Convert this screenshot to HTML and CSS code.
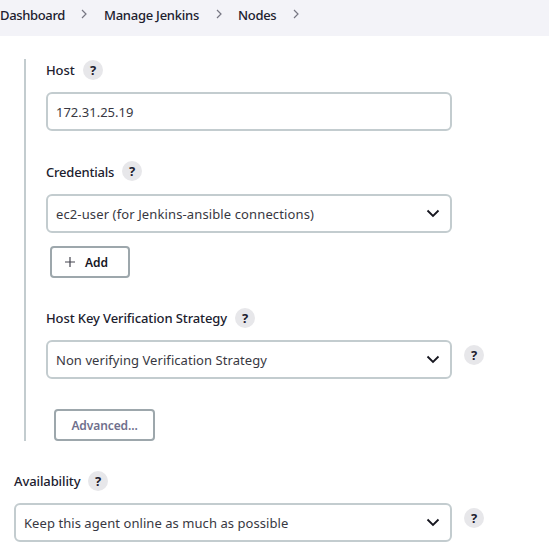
FILE: index.html
```html
<!DOCTYPE html>
<html lang="en">
<head>
<meta charset="utf-8">
<title>Nodes</title>
<link rel="stylesheet" href="styles.css">
</head>
<body>
<nav class="crumbs">
  <span class="crumb crumb-dashboard">Dashboard</span>
  <svg class="sep" viewBox="0 0 6 10"><path d="M1 1l4 4-4 4"/></svg>
  <span class="crumb crumb-manage">Manage Jenkins</span>
  <svg class="sep" viewBox="0 0 6 10"><path d="M1 1l4 4-4 4"/></svg>
  <span class="crumb crumb-nodes">Nodes</span>
  <svg class="sep" viewBox="0 0 6 10"><path d="M1 1l4 4-4 4"/></svg>
</nav>
<main>
  <section class="group">
    <div class="label"><span class="label-host">Host</span><span class="help">?</span></div>
    <div class="field"><span class="value value-host">172.31.25.19</span></div>
    <div class="label label-gap"><span class="label-credentials">Credentials</span><span class="help">?</span></div>
    <div class="field"><span class="value value-user">ec2-user (for Jenkins-ansible connections)</span><svg class="chevron" viewBox="0 0 14 9"><path d="M1.5 1.5L7 7l5.500-5.500"/></svg></div>
    <button class="button add"><svg class="plus" viewBox="0 0 10 10"><path d="M5 0v10M0 5h10"/></svg><span>Add</span></button>
    <div class="label label-strategy"><span class="label-key">Host Key Verification Strategy</span><span class="help">?</span></div>
    <div class="row">
      <div class="field"><span class="value value-strategy">Non verifying Verification Strategy</span><svg class="chevron" viewBox="0 0 14 9"><path d="M1.500 1.500L7 7l5.500-5.500"/></svg></div>
      <span class="help">?</span>
    </div>
    <button class="button advanced"><span>Advanced...</span></button>
  </section>
  <section class="availability">
    <div class="label"><span class="label-availability">Availability</span><span class="help">?</span></div>
    <div class="row">
      <div class="field field-wide"><span class="value value-keep">Keep this agent online as much as possible</span><svg class="chevron" viewBox="0 0 14 9"><path d="M1.500 1.500L7 7l5.500-5.500"/></svg></div>
      <span class="help">?</span>
    </div>
  </section>
</main>
</body>
</html>
```
FILE: styles.css
```css
* { box-sizing: border-box; }
body {
  margin: 0;
  height: 551px;
  overflow: hidden;
  background: #fff;
  color: #20202e;
  font: 13px/20px "Noto Sans", "Open Sans", sans-serif;
}
.crumbs {
  height: 36px;
  display: flex;
  align-items: center;
  padding-bottom: 6px;
  background: #f3f3f8;
  font-weight: 500;
}
.crumb { white-space: nowrap; }
.crumb-dashboard { width: 81px; letter-spacing: -0.35px; }
.crumb-manage { width: 112px; margin-left: 17px; letter-spacing: -0.25px; }
.crumb-nodes { width: 55px; margin-left: 16px; letter-spacing: -0.3px; }
.sep { width: 6px; height: 10px; margin-bottom: 2px; flex: none; }
.sep path { fill: none; stroke: #777783; stroke-width: 1.2; }
.group {
  margin: 23px 0 0 24px;
  padding-left: 20px;
  height: 382px;
  border-left: 2px solid #c3cccf;
  display: flex;
  flex-direction: column;
  align-items: flex-start;
}
.label {
  height: 20px;
  margin-top: 1px;
  display: flex;
  align-items: center;
  gap: 8px;
  font-weight: 500;
  white-space: nowrap;
}
.label-gap { margin-top: 30px; margin-bottom: 1px; }
.label-strategy { margin-top: 30px; }
.label-host { width: 29px; letter-spacing: -0.1px; }
.label-credentials { width: 68px; padding-top: 1px; letter-spacing: -0.2px; }
.label-key { width: 181px; letter-spacing: -0.11px; }
.label-availability { width: 66px; letter-spacing: -0.1px; }
.help {
  width: 20px;
  height: 20px;
  flex: none;
  border-radius: 50%;
  background: #e7e7ea;
  font-size: 13px;
  font-weight: 700;
  line-height: 20px;
  text-align: center;
}
.field {
  width: 406px;
  height: 39px;
  margin-top: 12px;
  padding: 0 10px 0 8px;
  border: 2px solid #c3cccf;
  border-radius: 6px;
  display: flex;
  align-items: center;
  justify-content: space-between;
  flex: none;
}
.field-wide { width: 438px; }
.value { white-space: nowrap; color: #383842; }
.value-user { letter-spacing: 0.12px; }
.value-strategy { letter-spacing: 0.06px; }
.value-keep { letter-spacing: 0.06px; }
.chevron { width: 14px; height: 9px; }
.chevron path { fill: none; stroke: #16161f; stroke-width: 1.8; }
.row { display: flex; gap: 12px; }
.row .help { margin-top: 17px; }
.button {
  height: 32px;
  padding: 0;
  border: 2px solid #9da7ac;
  border-radius: 4px;
  background: #fff;
  color: #16161f;
  font: 600 12px/20px "Noto Sans", "Open Sans", sans-serif;
  display: flex;
  align-items: center;
  flex: none;
}
.button span { padding-top: 2px; }
.add { width: 80px; margin: 13px 0 0 4px; padding-left: 13px; gap: 10px; }
.plus { width: 10px; height: 10px; }
.plus path { stroke: #44444f; stroke-width: 1.2; }
.advanced { width: 101px; margin: 30px 0 0 8px; justify-content: center; color: #6f6f8c; letter-spacing: -0.1px; }
.availability { margin: 30px 0 0 14px; }
```
